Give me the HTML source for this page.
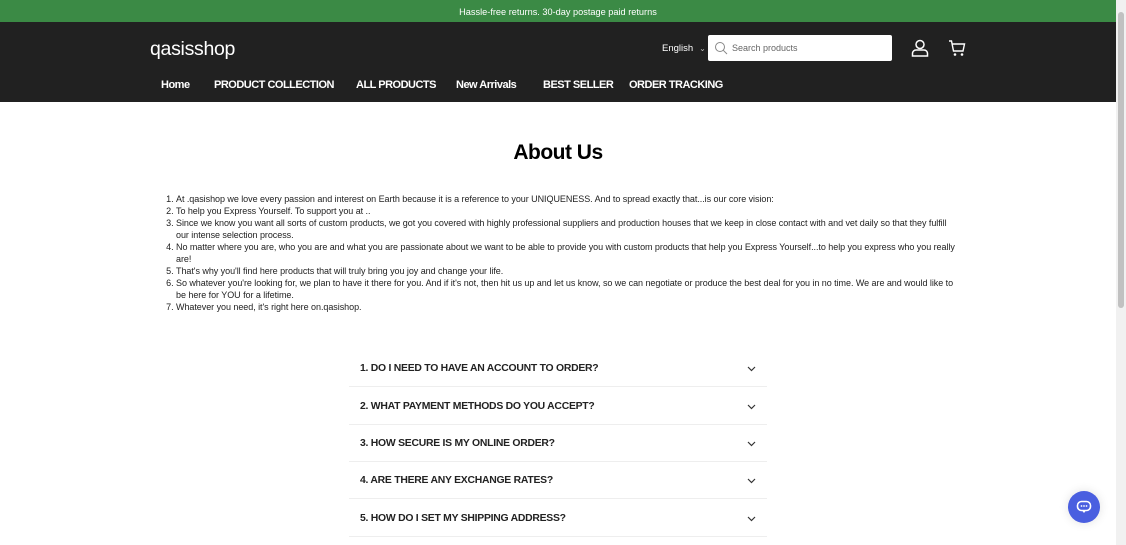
<!DOCTYPE html>
<html><head><meta charset="utf-8"><style>
*{margin:0;padding:0;box-sizing:border-box}
body{width:1126px;height:545px;overflow:hidden;background:#fff;font-family:"Liberation Sans",sans-serif;position:relative}
.top{position:absolute;left:0;top:0;width:1116px;height:22px;background:#3b8a45;color:#fff;font-size:9.2px;text-align:center;line-height:25px}
.hdr{position:absolute;left:0;top:22px;width:1116px;height:80px;background:#212121;color:#fff}
.logo{position:absolute;left:150px;top:16px;font-size:19.5px;letter-spacing:-0.3px}
.lang{position:absolute;left:662px;top:21px;font-size:9.5px}
.lang span{font-size:8px;margin-left:6px;color:#bbb}
.search{position:absolute;left:708px;top:13px;width:184px;height:26px;background:#fff;border-radius:2px}
.search .t{position:absolute;left:24px;top:8px;font-size:9px;color:#666}
.nav{position:absolute;top:57px;left:161px;font-size:11px;font-weight:bold;letter-spacing:-0.5px}
.nav span{position:absolute;white-space:nowrap}
h1{position:absolute;top:141px;left:0;width:1116px;text-align:center;font-size:21px;letter-spacing:-0.5px}
ol{position:absolute;left:166px;top:193px;width:793px;font-size:9px;line-height:12px;color:#222;padding-left:10px;letter-spacing:-0.05px}
.faq{position:absolute;left:349px;width:418px;height:37px;border-bottom:1px solid #eee;font-size:10.4px;font-weight:bold;color:#222;letter-spacing:-0.25px}
.faq .q{position:absolute;left:11px}
.faq svg{position:absolute;right:11px}
.sb{position:absolute;left:1116px;top:0;width:10px;height:545px;background:#f1f1f1}
.thumb{position:absolute;left:1118px;top:12px;width:6px;height:296px;background:#c1c1c1;border-radius:3px}
.chat{position:absolute;left:1068px;top:491px;width:32px;height:32px;border-radius:50%;background:#4a5fe0;box-shadow:0 0 10px rgba(0,0,0,.12)}
</style></head><body>
<div class="top">Hassle-free returns. 30-day postage paid returns</div>
<div class="hdr">
<div class="logo">qasisshop</div>
<div class="lang">English<span>&#8964;</span></div>
<div class="search"><svg width="14" height="14" style="position:absolute;left:6px;top:6px" viewBox="0 0 14 14"><circle cx="6" cy="6" r="4.5" fill="none" stroke="#888" stroke-width="1"/><path d="M9.3 9.3L13 13" stroke="#888" stroke-width="1"/></svg><div class="t">Search products</div></div>
<svg style="position:absolute;left:911px;top:17px" width="18" height="18" viewBox="0 0 18 18"><circle cx="9" cy="5.5" r="4" fill="none" stroke="#fff" stroke-width="1.5"/><path d="M1.5 17v-2.5a3.5 3.5 0 0 1 3.5-3.5h8a3.5 3.5 0 0 1 3.5 3.5V17z" fill="none" stroke="#fff" stroke-width="1.5"/></svg>
<svg style="position:absolute;left:948px;top:18px" width="18" height="17" viewBox="0 0 18 17"><path d="M1 1h2.5l2 10h9.5l1.5-7H4.5" fill="none" stroke="#fff" stroke-width="1.4"/><circle cx="7" cy="14.5" r="1.3" fill="#fff"/><circle cx="14" cy="14.5" r="1.3" fill="#fff"/></svg>
<div class="nav"><span style="left:0">Home</span><span style="left:53px">PRODUCT COLLECTION</span><span style="left:195px">ALL PRODUCTS</span><span style="left:295px">New Arrivals</span><span style="left:382px">BEST SELLER</span><span style="left:468px">ORDER TRACKING</span></div>
</div>
<h1>About Us</h1>
<ol>
<li>At .qasishop we love every passion and interest on Earth because it is a reference to your UNIQUENESS. And to spread exactly that...is our core vision:</li>
<li>To help you Express Yourself. To support you at ..</li>
<li>Since we know you want all sorts of custom products, we got you covered with highly professional suppliers and production houses that we keep in close contact with and vet daily so that they fulfill our intense selection process.</li>
<li>No matter where you are, who you are and what you are passionate about we want to be able to provide you with custom products that help you Express Yourself...to help you express who you really are!</li>
<li>That's why you'll find here products that will truly bring you joy and change your life.</li>
<li>So whatever you're looking for, we plan to have it there for you. And if it's not, then hit us up and let us know, so we can negotiate or produce the best deal for you in no time. We are and would like to be here for YOU for a lifetime.</li>
<li>Whatever you need, it's right here on.qasishop.</li>
</ol>
<div class="faq" style="top:350px"><div class="q" style="top:13px">1. DO I NEED TO HAVE AN ACCOUNT TO ORDER?</div><svg style="top:16px" width="9" height="6" viewBox="0 0 9 6"><path d="M1 1l3.5 3.5L8 1" fill="none" stroke="#333" stroke-width="1.2"/></svg></div>
<div class="faq" style="top:388px"><div class="q" style="top:13px">2. WHAT PAYMENT METHODS DO YOU ACCEPT?</div><svg style="top:16px" width="9" height="6" viewBox="0 0 9 6"><path d="M1 1l3.5 3.5L8 1" fill="none" stroke="#333" stroke-width="1.2"/></svg></div>
<div class="faq" style="top:425px"><div class="q" style="top:13px">3. HOW SECURE IS MY ONLINE ORDER?</div><svg style="top:16px" width="9" height="6" viewBox="0 0 9 6"><path d="M1 1l3.5 3.5L8 1" fill="none" stroke="#333" stroke-width="1.2"/></svg></div>
<div class="faq" style="top:462px"><div class="q" style="top:13px">4. ARE THERE ANY EXCHANGE RATES?</div><svg style="top:16px" width="9" height="6" viewBox="0 0 9 6"><path d="M1 1l3.5 3.5L8 1" fill="none" stroke="#333" stroke-width="1.2"/></svg></div>
<div class="faq" style="top:500px"><div class="q" style="top:13px">5. HOW DO I SET MY SHIPPING ADDRESS?</div><svg style="top:16px" width="9" height="6" viewBox="0 0 9 6"><path d="M1 1l3.5 3.5L8 1" fill="none" stroke="#333" stroke-width="1.2"/></svg></div>
<div class="chat"><svg style="position:absolute;left:8px;top:9px" width="16" height="14" viewBox="0 0 16 14"><rect x="1.5" y="1.5" width="13" height="9" rx="4" fill="none" stroke="#fff" stroke-width="1.6"/><path d="M6 10.5l2 2.5 2-2.5" fill="#fff"/><circle cx="5.5" cy="6" r="0.9" fill="#fff"/><circle cx="8" cy="6" r="0.9" fill="#fff"/><circle cx="10.5" cy="6" r="0.9" fill="#fff"/></svg></div>
<div class="sb"></div><div class="thumb"></div>
</body></html>
